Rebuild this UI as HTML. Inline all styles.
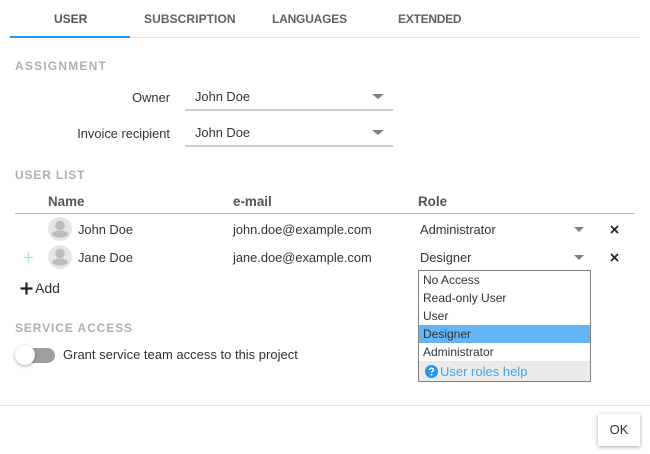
<!DOCTYPE html>
<html><head><meta charset="utf-8">
<style>
html,body{margin:0;padding:0;background:#fff}
body{width:650px;height:454px;position:relative;overflow:hidden;font-family:"Liberation Sans",sans-serif;font-size:12.85px;color:#333}
.t{position:absolute;white-space:nowrap;line-height:16px}
.l{position:absolute}
.tab{font-size:12px;font-weight:700;color:#616161;top:11px}
.sec{font-size:12px;font-weight:700;color:#b0b0b0;letter-spacing:1.1px}
.th{font-size:13.4px;font-weight:700;color:#555;top:194px}
.arr{position:absolute;width:0;height:0;border-left:6px solid transparent;border-right:6px solid transparent;border-top:5px solid #808080}
.opt{position:absolute;left:1px;width:171px;height:18px;line-height:18px;padding-left:4px;box-sizing:border-box;font-size:12px;color:#333;white-space:nowrap}
</style></head><body>
<div class="t tab" style="left:54px;color:#555">USER</div>
<div class="t tab" style="left:144px;letter-spacing:.08px">SUBSCRIPTION</div>
<div class="t tab" style="left:272px;letter-spacing:-.2px">LANGUAGES</div>
<div class="t tab" style="left:398px;letter-spacing:-.25px">EXTENDED</div>
<div class="l" style="left:10px;top:37px;width:630px;height:1px;background:#e4e4e4"></div>
<div class="l" style="left:10px;top:36px;width:120px;height:2px;background:#2196f3"></div>

<div class="t sec" style="left:15px;top:58px;letter-spacing:1.2px">ASSIGNMENT</div>
<div class="t" style="right:480px;top:90px">Owner</div>
<div class="t" style="left:195px;top:89px">John Doe</div>
<div class="arr" style="left:372px;top:94px"></div>
<div class="l" style="left:185px;top:109px;width:208px;height:2px;background:#ccc"></div>
<div class="t" style="right:480px;top:126px">Invoice recipient</div>
<div class="t" style="left:195px;top:125px">John Doe</div>
<div class="arr" style="left:372px;top:130px"></div>
<div class="l" style="left:185px;top:145px;width:208px;height:2px;background:#ccc"></div>

<div class="t sec" style="left:15px;top:167px;letter-spacing:.85px">USER LIST</div>
<div class="t th" style="left:48px">Name</div>
<div class="t th" style="left:233px">e-mail</div>
<div class="t th" style="left:418px">Role</div>
<div class="l" style="left:15px;top:213px;width:620px;height:1px;background:#bbb"></div>

<svg class="l" style="left:48px;top:217px" width="24" height="24" viewBox="0 0 24 24"><circle cx="12" cy="12" r="12" fill="#e6e6e6"/><circle cx="12" cy="8.500" r="4.800" fill="#bdbdbd"/><ellipse cx="12" cy="17" rx="8" ry="3.600" fill="#bdbdbd"/></svg>
<div class="t" style="left:78px;top:222px">John Doe</div>
<div class="t" style="left:233px;top:222px">john.doe@example.com</div>
<div class="t" style="left:420px;top:222px">Administrator</div>
<div class="arr" style="left:574px;top:227px;border-left-width:5.500px;border-right-width:5.500px"></div>
<svg class="l" style="left:610px;top:225px" width="9" height="9" viewBox="0 0 9 9"><path d="M1 1L8 8M8 1L1 8" stroke="#222" stroke-width="1.700"/></svg>

<svg class="l" style="left:23px;top:252px" width="11" height="11" viewBox="0 0 11 11"><path d="M5.500 .5V10.500M.5 5.500H10.500" stroke="#b5e3b8" stroke-width="1.200"/></svg>
<svg class="l" style="left:48px;top:245px" width="24" height="24" viewBox="0 0 24 24"><circle cx="12" cy="12" r="12" fill="#e6e6e6"/><circle cx="12" cy="8.500" r="4.800" fill="#bdbdbd"/><ellipse cx="12" cy="17" rx="8" ry="3.600" fill="#bdbdbd"/></svg>
<div class="t" style="left:78px;top:250px">Jane Doe</div>
<div class="t" style="left:233px;top:250px">jane.doe@example.com</div>
<div class="t" style="left:420px;top:250px">Designer</div>
<div class="arr" style="left:574px;top:255px;border-left-width:5.500px;border-right-width:5.500px"></div>
<svg class="l" style="left:610px;top:253px" width="9" height="9" viewBox="0 0 9 9"><path d="M1 1L8 8M8 1L1 8" stroke="#222" stroke-width="1.700"/></svg>

<svg class="l" style="left:20px;top:282px" width="13" height="13" viewBox="0 0 13 13"><path d="M6.500 .5V12.500M.5 6.500H12.500" stroke="#222" stroke-width="2.200"/></svg>
<div class="t" style="left:35px;top:280px;font-size:14px">Add</div>

<div class="l" style="left:418px;top:270px;width:173px;height:112px;box-sizing:border-box;border:1px solid #808080;background:#fff">
<div class="opt" style="left:0;top:0">No Access</div>
<div class="opt" style="left:0;top:18px">Read-only User</div>
<div class="opt" style="left:0;top:36px">User</div>
<div class="opt" style="left:0;top:54px;background:#64b5f6">Designer</div>
<div class="opt" style="left:0;top:72px">Administrator</div>
<div class="opt" style="left:0;top:90px;height:20px;line-height:22px;background:#ebebeb;color:#42a5f5;padding-left:21px;font-size:13px">User roles help</div>
<svg class="l" style="left:6px;top:94px" width="13" height="13" viewBox="0 0 13 13"><circle cx="6.500" cy="6.500" r="6.500" fill="#2196f3"/><path d="M4.500 5c0-1.200 1-1.800 2-1.800s2 .6 2 1.700c0 1.300-2 1.400-2 2.800" stroke="#fff" stroke-width="1.400" fill="none"/><rect x="5.700" y="9" width="1.600" height="1.600" fill="#fff"/></svg>
</div>

<div class="t sec" style="left:15px;top:320px;letter-spacing:.9px">SERVICE ACCESS</div>
<div class="l" style="left:17px;top:348px;width:38px;height:15px;border-radius:8px;background:#9e9e9e"></div>
<div class="l" style="left:15px;top:345px;width:20px;height:20px;border-radius:50%;background:#fff;box-shadow:0 1px 3px rgba(0,0,0,.35)"></div>
<div class="t" style="left:63px;top:347px;font-size:13px">Grant service team access to this project</div>

<div class="l" style="left:0;top:405px;width:650px;height:1px;background:#e4e4e4"></div>
<div class="l" style="left:598px;top:414px;width:42px;height:32px;background:#fff;box-shadow:0 1px 4px rgba(0,0,0,.35);text-align:center;line-height:32px;font-size:13px;color:#333">OK</div>
</body></html>
